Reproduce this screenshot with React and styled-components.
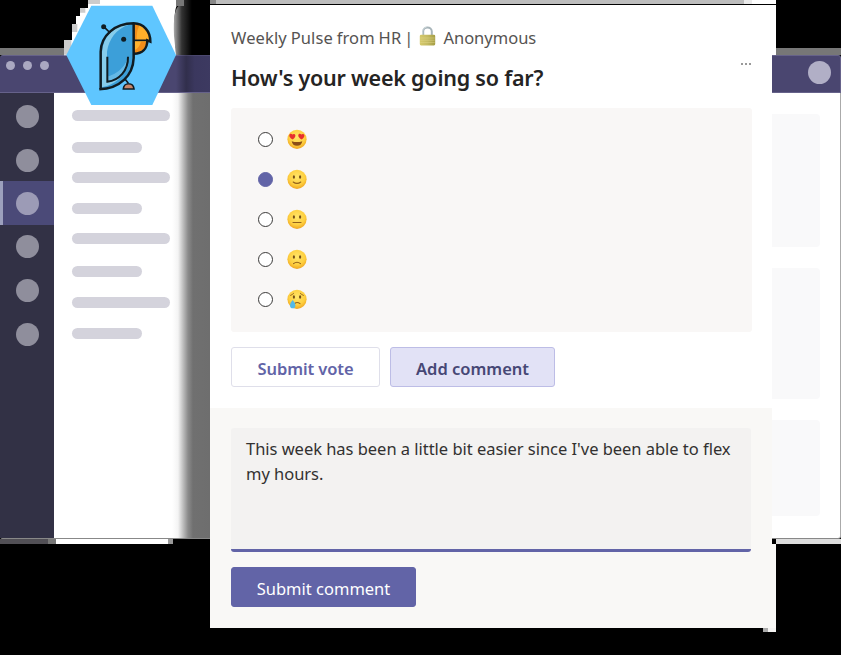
import React from "react";
import styled, { createGlobalStyle } from "styled-components";

const GlobalStyle = createGlobalStyle`
  * { box-sizing: border-box; }
  body { margin: 0; background: #000; }
`;

const Stage = styled.main`
  position: relative;
  width: 841px;
  height: 655px;
  overflow: hidden;
  background: #000;
  font-family: "Noto Sans", "Open Sans", sans-serif;
`;

/* ---------- application window behind the card ---------- */

const Window = styled.section`
  display: flex;
  flex-direction: column;
  width: 841px;
  height: 544px;
  padding-top: 48px;
`;

const TopFringe = styled.div`
  flex: 0 0 7px;
  background: #777;
`;

const TitleBar = styled.header`
  flex: 0 0 38px;
  display: flex;
  justify-content: space-between;
  align-items: center;
  padding: 0 9px 3px 6px;
  background: #4a4670;
  border: 1px solid #66628a;
  border-width: 1px 1px 1px 0;
  border-radius: 3px 3px 0 0;
`;

const WindowDots = styled.div`
  display: flex;
  gap: 8px;
  padding-bottom: 15px;
`;

const Dot = styled.span`
  width: ${(p) => p.$size}px;
  height: ${(p) => p.$size}px;
  border-radius: 50%;
  background: ${(p) => p.$color};
`;

const WindowBody = styled.div`
  flex: 0 0 446px;
  display: flex;
  background: #fff;
  border-right: 1px solid #aaa;
  border-bottom: 1px solid #888;
  border-radius: 0 0 3px 3px;
`;

const Rail = styled.nav`
  flex: 0 0 54px;
  background: #323145;
`;

const RailItem = styled.div`
  display: flex;
  align-items: center;
  justify-content: center;
  height: ${(p) => p.$height}px;
  padding-right: ${(p) => (p.$active ? 3 : 0)}px;
  border-left: ${(p) => (p.$active ? "3px solid #9ca0bd" : "0")};
  background: ${(p) => (p.$active ? "#4b4a78" : "transparent")};
`;

const ChannelList = styled.div`
  flex: 0 0 156px;
  display: flex;
  flex-direction: column;
  padding: 17px 0 0 18px;
  background: linear-gradient(
    90deg,
    #fff 118px,
    #f4f4f4 124px,
    #c9c9c9 128px,
    #8b8b8b 134px,
    #707070 139px,
    #6e6e6e 156px
  );
`;

const Line = styled.span`
  width: ${(p) => (p.$short ? 70 : 98)}px;
  height: 11px;
  margin-bottom: ${(p) => p.$gap}px;
  border-radius: 6px;
  background: #d4d3dc;
`;

const Content = styled.div`
  flex: 1;
  display: flex;
  flex-direction: column;
  gap: 21px;
  padding: 21px 20px 0 0;
`;

const Tile = styled.div`
  height: ${(p) => p.$height}px;
  border-radius: 4px;
  background: #f9f9fa;
`;

const BottomFringe = styled.div`
  flex: 0 0 5px;
  background: linear-gradient(
    90deg,
    #514f55 48px,
    #777 48px 56px,
    #fff 56px 168px,
    #999 168px 173px,
    #000 173px 776px,
    #ddd 776px
  );
`;

/* ---------- decoration laid over the window ---------- */

const Overlay = styled.svg`
  position: absolute;
  top: 0;
  left: 60px;
`;

/* ---------- poll card ---------- */

const CardBacking = styled.div`
  position: absolute;
  left: 210px;
  top: 0;
  width: 566px;
  height: 632px;
  background: linear-gradient(
    90deg,
    transparent 553px,
    #aaa 553px 558px,
    #f3f2f1 558px
  )
    bottom / 100% 4px no-repeat;
`;

const CardEdge = styled.div`
  height: 5px;
  border-bottom: 1px solid #000;
  background: linear-gradient(
    90deg,
    #888 6px,
    #bdbdbd 6px 534px,
    #eaeaea 534px 542px,
    #fff 542px
  );
`;

const Card = styled.article`
  display: flex;
  flex-direction: column;
  height: 623px;
  background: linear-gradient(#fff 50px, transparent 50px 539px, #f9f8f6 539px) right / 4px
    100% no-repeat;
  padding-right: 4px;
`;

const PollSection = styled.section`
  height: 403px;
  padding: 19px 19px 0 21px;
  background: #fff;
`;

const PollHeader = styled.div`
  display: grid;
  grid-template-columns: 1fr auto;
`;

const Meta = styled.div`
  display: flex;
  align-items: center;
  height: 26px;
  font-size: 16.5px;
  color: #555352;
  white-space: pre;
`;

const Source = styled.span`
  letter-spacing: 0.12px;
  word-spacing: -0.6px;
`;

const Divider = styled.span`
  margin-left: 3px;
`;

const LockIcon = styled.svg`
  margin: 0 7px 2px 6px;
`;

const Question = styled.h1`
  grid-column: 1;
  margin: 0;
  height: 58px;
  padding-top: 13px;
  font-size: 21.5px;
  line-height: 30px;
  font-weight: 600;
  letter-spacing: -0.22px;
  color: #252423;
`;

const MoreButton = styled.span`
  grid-column: 2;
  grid-row: 1 / span 2;
  display: flex;
  gap: 2px;
  padding: 39px 2px 0 0;
`;

const MoreDot = styled.i`
  width: 2px;
  height: 2px;
  background: #999;
`;

const Options = styled.div`
  display: flex;
  flex-direction: column;
  height: 224px;
  width: 521px;
  padding: 11px 26px;
  border-radius: 3px;
  background: #f9f7f6;
`;

const Option = styled.label`
  display: flex;
  align-items: center;
  gap: 13px;
  height: 40px;
`;

const Radio = styled.span`
  width: 15px;
  height: 15px;
  margin: 0 1px;
  border: 1.3px solid ${(p) => (p.$checked ? "#6264a7" : "#3b3a39")};
  border-radius: 50%;
  background: ${(p) => (p.$checked ? "#6264a7" : "#fff")};
`;

const Actions = styled.div`
  display: flex;
  gap: 10px;
  padding-top: 15px;
`;

const palettes = {
  plain: ["#fff", "#dfdfea", "#6264a7"],
  soft: ["#e2e2f6", "#bdbde6", "#464775"],
  solid: ["#6264a7", "#6264a7", "#fff"],
};

const Button = styled.button`
  width: ${(p) => p.$width}px;
  height: 40px;
  padding: 3px 0 0;
  border: 1px solid ${(p) => palettes[p.$kind][1]};
  border-radius: 3px;
  background: ${(p) => palettes[p.$kind][0]};
  color: ${(p) => palettes[p.$kind][2]};
  font-family: inherit;
  font-size: 16.5px;
  line-height: 24px;
  font-weight: ${(p) => (p.$kind === "solid" ? 400 : 600)};
  letter-spacing: ${(p) => (p.$kind === "plain" ? -0.09 : 0)}px;
`;

const CommentSection = styled.section`
  height: 220px;
  padding: 20px 21px 0;
  background: #f9f8f6;
`;

const CommentBox = styled.div`
  width: 520px;
  height: 124px;
  margin-bottom: 15px;
  padding: 8px 15px;
  border-bottom: 3px solid #6264a7;
  border-radius: 3px;
  background: #f3f2f1;
  color: #323130;
  font-size: 16.5px;
  line-height: 25px;
  letter-spacing: -0.03px;
  white-space: pre-line;
`;

const rail = [
  { height: 47 },
  { height: 41 },
  { height: 44, active: true },
  { height: 42 },
  { height: 47 },
  { height: 41 },
];

const lineGaps = [21, 19, 20, 19, 22, 20, 20, 0];

const faces = [
  { mood: "love", label: "Love it" },
  { mood: "smile", label: "Good" },
  { mood: "neutral", label: "Okay" },
  { mood: "frown", label: "Not great" },
  { mood: "cry", label: "Bad" },
];

const heart = "c-2.4-1.5-3.6-3-3.3-4.6c.4-1.6 2.3-1.7 3-.4c1.2-1.2 3.1-.6 3.1 1c0 1.6-1.3 2.9-2.8 4Z";

function Face({ mood, label }) {
  return (
    <svg width="20" height="20" viewBox="0 0 20 20" role="img" aria-label={label}>
      <defs>
        <radialGradient id={`face-${mood}`} cx=".5" cy=".38" r=".64">
          <stop offset="0" stopColor="#ffe66b" />
          <stop offset=".65" stopColor="#fecf3f" />
          <stop offset="1" stopColor="#eda11f" />
        </radialGradient>
      </defs>
      <circle cx="10" cy="10.3" r="9.6" fill={`url(#face-${mood})`} />
      {mood === "love" ? (
        <g>
          <g fill="#e7302e">
            <path d={`M5.6 10.6${heart}`} />
            <path d={`M14.6 10.6${heart}`} />
          </g>
          <path d="M4.7 12.2Q10 14 15.3 12.2Q14.5 16.8 10 16.8T4.7 12.2Z" fill="#8b4d16" />
        </g>
      ) : (
        <g fill="#755018">
          <ellipse cx="6.9" cy="8" rx="1.1" ry="1.65" />
          <ellipse cx="13.1" cy="8" rx="1.1" ry="1.65" />
        </g>
      )}
      <g fill="none" stroke="#91601b" strokeWidth="1.1" strokeLinecap="round">
        {mood === "smile" && <path d="M6.2 13Q10 15.8 13.8 13" />}
        {mood === "neutral" && <path d="M6 13.5H14" />}
        {mood === "frown" && <path d="M6.5 14.7Q10 11.8 13.5 14.7" />}
        {mood === "cry" && (
          <>
            <path d="M7.6 14.6Q10 12.3 13 14.6" />
            <path d="M3.6 6.4Q5.2 5.8 6.6 4.4M13.4 4.4Q14.8 5.8 16.4 6.4" strokeWidth=".9" />
          </>
        )}
      </g>
      {mood === "cry" && (
        <path
          d="M5.7 11.1C4.4 13 3 14.4 3 16.4C3 18.3 4.2 19.3 5.7 19.3S8.4 18.3 8.4 16.4C8.4 14.4 7 13 5.7 11.1Z"
          fill="#53b9e8"
        />
      )}
    </svg>
  );
}

function Lock() {
  return (
    <LockIcon width="17" height="20" viewBox="0 0 17 20" aria-hidden="true">
      <defs>
        <linearGradient id="lock-body">
          <stop offset="0" stopColor="#d5c96b" />
          <stop offset=".5" stopColor="#c4ba62" />
          <stop offset="1" stopColor="#a49d44" />
        </linearGradient>
      </defs>
      <path d="M4.2 10V5.6C4.2 .2 12.8 .2 12.8 5.6V10" fill="none" stroke="#a7b4b9" strokeWidth="2" />
      <path d="M3.7 9V5.5C3.7 3 5.2 1.5 7.5 1.2" fill="none" stroke="#d6dfe2" strokeWidth=".8" />
      <rect x=".8" y="8.8" width="15.4" height="10.6" rx="1.3" fill="url(#lock-body)" />
      <path d="M1.2 12H15.8M1.2 14.2H15.8M1.2 16.4H15.8" stroke="#e3d98e" strokeWidth=".5" />
    </LockIcon>
  );
}

function ParrotBadge() {
  return (
    <Overlay width="150" height="110" viewBox="0 0 450 330" aria-label="Parrot logo">
      <defs>
        <linearGradient id="bar-shade">
          <stop offset="0" stopColor="#292740" stopOpacity="0" />
          <stop offset=".3" stopColor="#292740" stopOpacity=".75" />
          <stop offset=".55" stopColor="#37345a" stopOpacity=".8" />
          <stop offset="1" stopColor="#37345a" stopOpacity=".7" />
        </linearGradient>
        <linearGradient id="smudge">
          <stop offset="0" stopColor="#aaa" />
          <stop offset=".22" stopColor="#333" />
          <stop offset=".5" stopColor="#000" />
        </linearGradient>
      </defs>
      <path d="M348 166H450V276H348Z" fill="url(#bar-shade)" />
      <path
        d="M12 166V120H36V96H36V72H48V48H60V24H84V0H351V15Q340 35 345 105L348 166H12Z"
        fill="#fff"
      />
      <path d="M84 0H120V12H84ZM60 24H76V38H60ZM36 72H52V96H36ZM12 120H34V164H12Z" fill="#ccc" />
      <path d="M372 0H450V165H348L342 108Q338 24 360 15H372Z" fill="url(#smudge)" />
      <path d="M348 0H372V18H348Z" fill="#777" />
      <path d="M94 17H277L348 165L277 315H94L19 165Z" fill="#5fc6ff" />
      <path d="M122 269V155C124 108 162 71 221 70V170C219 225 181 266 122 269Z" fill="#3c9fd9" />
      <path
        d="M126 262V158C129 111 160 75 207 74C168 87 147 116 141 155V231C172 225 190 210 202 178C201 221 173 253 126 262Z"
        fill="#86cdec"
      />
      <path d="M143 230Q180 219 203 182C200 220 175 240 143 245Z" fill="#65b9e6" />
      <path d="M221 70C251 72 270 94 271 126L261 121H221Z" fill="#ffae2a" />
      <path d="M221 72Q232 73 238 77Q229 93 230 119H221Z" fill="#f18d1a" />
      <path d="M221 121H262C262 146 245 162 221 162Z" fill="#ffb22e" />
      <path d="M224 150Q237 145 243 125H259C257 147 242 157 224 158Z" fill="#f18d1a" />
      <path d="M190 267C191 247 220 247 222 267Z" fill="#c88669" />
      <g fill="none" stroke="#101c22" strokeWidth="7.5" strokeLinejoin="miter">
        <path d="M122 268V155C123 108 163 70 221 70C251 71 271 93 271 125L262 121C262 146 247 161 222 161" />
        <path d="M221 70V121V174C219 226 180 266 118 268" />
        <path d="M221 121H263" strokeWidth="5" />
        <path d="M142 170V245C178 241 205 211 204 170" strokeWidth="6" />
        <path d="M131 80L151 99" strokeWidth="5" />
        <path d="M195 237L205 250M190 267C191 246 220 246 222 267Z" strokeWidth="5" />
      </g>
      <g fill="#101c22">
        <circle cx="131" cy="80" r="7.5" />
        <circle cx="191" cy="118" r="7.5" />
      </g>
    </Overlay>
  );
}

export default function App() {
  return (
    <Stage>
      <GlobalStyle />
      <Window>
        <TopFringe />
        <TitleBar>
          <WindowDots>
            {[0, 1, 2].map((i) => (
              <Dot key={i} $size={9} $color="#aaa8c1" />
            ))}
          </WindowDots>
          <Dot $size={23} $color="#b1afc6" />
        </TitleBar>
        <WindowBody>
          <Rail>
            {rail.map((item, i) => (
              <RailItem key={i} $height={item.height} $active={item.active}>
                <Dot $size={23} $color={item.active ? "#9c9bb6" : "#8f8e9c"} />
              </RailItem>
            ))}
          </Rail>
          <ChannelList>
            {lineGaps.map((gap, i) => (
              <Line key={i} $short={i % 2 === 1} $gap={gap} />
            ))}
          </ChannelList>
          <Content>
            <Tile $height={133} />
            <Tile $height={131} />
            <Tile $height={96} />
          </Content>
        </WindowBody>
        <BottomFringe />
      </Window>

      <ParrotBadge />

      <CardBacking>
        <CardEdge />
        <Card>
          <PollSection>
            <PollHeader>
              <Meta>
                <Source>Weekly Pulse from HR</Source>
                <Divider>|</Divider>
                <Lock />
                <span>Anonymous</span>
              </Meta>
              <Question>How's your week going so far?</Question>
              <MoreButton aria-label="More options">
                <MoreDot />
                <MoreDot />
                <MoreDot />
              </MoreButton>
            </PollHeader>
            <Options>
              {faces.map((face) => (
                <Option key={face.mood}>
                  <Radio $checked={face.mood === "smile"} />
                  <Face {...face} />
                </Option>
              ))}
            </Options>
            <Actions>
              <Button $kind="plain" $width={149}>Submit vote</Button>
              <Button $kind="soft" $width={165}>Add comment</Button>
            </Actions>
          </PollSection>
          <CommentSection>
            <CommentBox>
              {"This week has been a little bit easier since I've been able to flex\nmy hours."}
            </CommentBox>
            <Button $kind="solid" $width={185}>Submit comment</Button>
          </CommentSection>
        </Card>
      </CardBacking>
    </Stage>
  );
}
